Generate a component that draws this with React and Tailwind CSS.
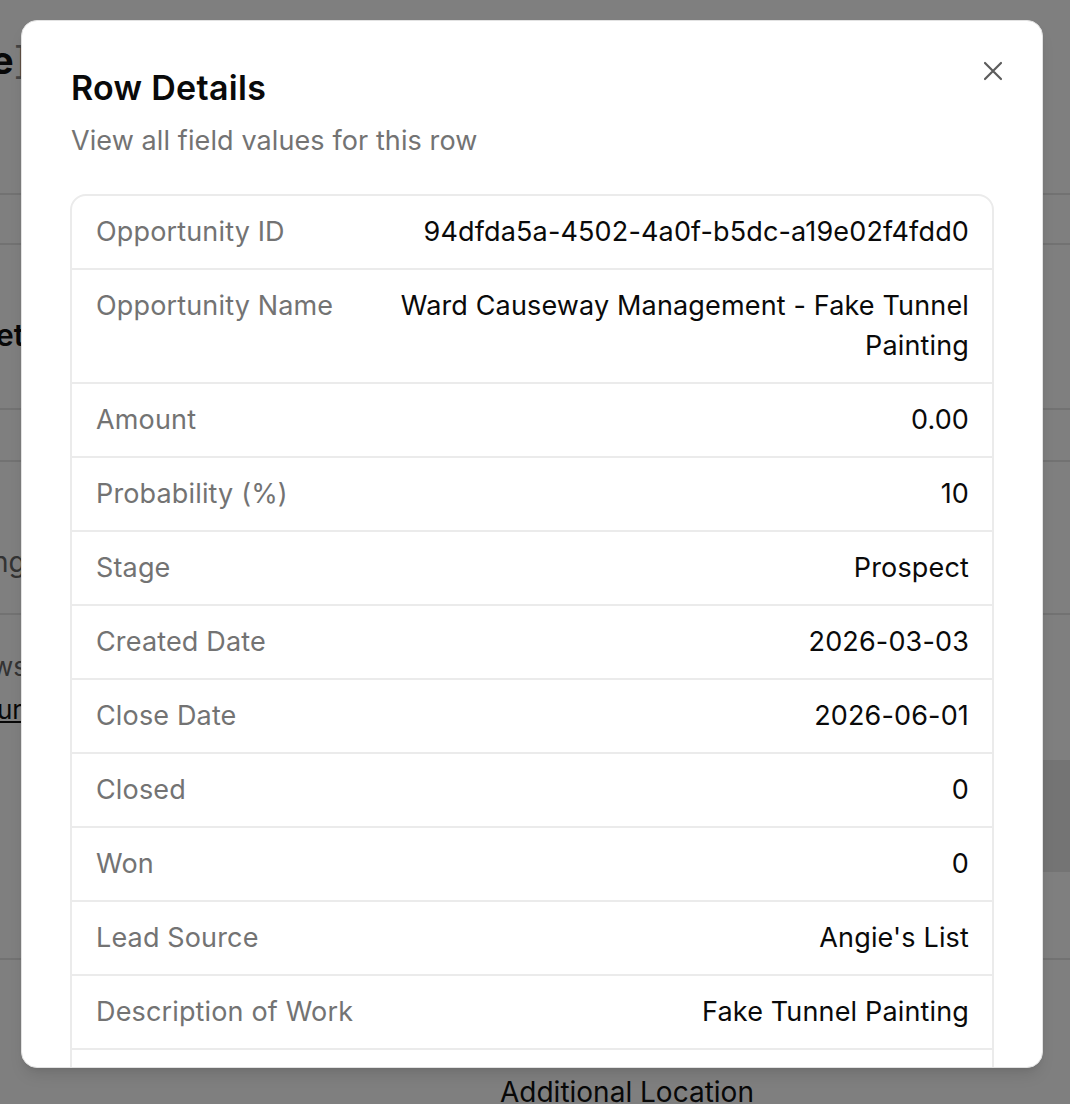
import React from 'react';

// Fields shown in the details dialog
const ROWS = [
  { label: 'Opportunity ID', value: '94dfda5a-4502-4a0f-b5dc-a19e02f4fdd0' },
  { label: 'Opportunity Name', value: 'Ward Causeway Management - Fake Tunnel Painting' },
  { label: 'Amount', value: '0.00' },
  { label: 'Probability (%)', value: '10' },
  { label: 'Stage', value: 'Prospect' },
  { label: 'Created Date', value: '2026-03-03' },
  { label: 'Close Date', value: '2026-06-01' },
  { label: 'Closed', value: '0' },
  { label: 'Won', value: '0' },
  { label: 'Lead Source', value: "Angie's List" },
  { label: 'Description of Work', value: 'Fake Tunnel Painting' },
  { label: 'Additional Location', value: '—' },
  { label: 'Notes', value: '—' },
];

const CloseIcon = () => (
  <svg width="20" height="20" viewBox="0 0 20 20" fill="none" stroke="#5c5c5c" strokeWidth="2.2" strokeLinecap="round">
    <path d="M2 2 18 18M18 2 2 18" />
  </svg>
);

// The page that sits dimmed behind the dialog
const BackgroundPage = () => (
  <div className="flex flex-col text-[#111]">
    <div className="h-[195px] border-b-2 border-[#e5e5e5] pt-[38px]">
      <div className="-ml-[9px] text-[38px] font-bold leading-[44px]">
        e<span className="font-normal text-[#888]">]</span>
      </div>
    </div>
    <div className="h-[50px] border-b-2 border-[#e5e5e5]" />
    <div className="flex h-[165px] items-start border-b-2 border-[#e5e5e5] pt-[70px]">
      <span className="-ml-[4px] text-[30px] font-semibold leading-[40px]">et</span>
    </div>
    <div className="h-[52px] border-b-2 border-[#e5e5e5]" />
    <div className="h-[153px] border-b-2 border-[#e5e5e5] pt-[80px]">
      <span className="-ml-[8px] text-[28px] leading-[40px] text-[#666]">ng</span>
    </div>
    <div className="flex h-[145px] flex-col items-start pt-[32px]">
      <span className="-ml-[8px] text-[26px] leading-[40px] text-[#666]">ws</span>
      <span className="-ml-[3px] mt-[8px] text-[26px] leading-[30px] underline">ur</span>
    </div>
    <div className="ml-[200px] h-[112px] bg-[#e8e8e8]" />
    <div className="h-[88px] border-b-2 border-[#e5e5e5]" />
    <div className="pl-[500px] pt-[112px] text-[28px] leading-[40px]">Additional Location</div>
  </div>
);

const DetailRow = ({ label, value, last }) => (
  <div className={`flex gap-4 py-4 pl-6 pr-[23px] leading-[40px] ${last ? '' : 'border-b-2 border-[#ebebeb]'}`}>
    <div className="w-[260px] shrink-0 text-[#737373]">{label}</div>
    <div className="flex-1 text-right text-[#0a0a0a]">{value}</div>
  </div>
);

const App = () => {
  return (
    <div className="relative h-[1104px] w-full overflow-hidden bg-white font-['Inter','Noto_Sans',sans-serif]">
      <BackgroundPage />

      <div className="absolute inset-0 bg-black/50 pl-[21px] pt-[20px]">
        <div className="relative h-[1048px] w-[1022px] overflow-hidden rounded-2xl border border-[#e2e2e2] bg-white px-[48px] pt-[47px] shadow-lg">
          <button className="absolute right-[39px] top-[40px] flex h-5 w-5 items-center justify-center">
            <CloseIcon />
          </button>

          <h2 className="pl-[1px] text-[34px] font-semibold leading-[40px] tracking-[0.3px] text-[#0a0a0a]">Row Details</h2>
          <p className="mt-[13px] pl-[1px] text-[27px] leading-[40px] tracking-[0.1px] text-[#737373]">View all field values for this row</p>

          <div className="mt-[33px] overflow-hidden rounded-2xl border-2 border-[#ebebeb] text-[27px] tracking-[0.15px]">
            {ROWS.map((row, i) => (
              <DetailRow key={row.label} {...row} last={i === ROWS.length - 1} />
            ))}
          </div>
        </div>
      </div>
    </div>
  );
};

export default App;
